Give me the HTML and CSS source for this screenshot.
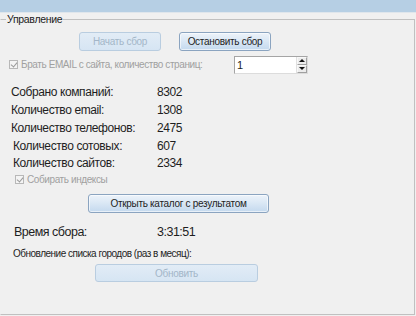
FILE: index.html
```html
<!DOCTYPE html>
<html lang="ru">
<head>
  <meta charset="UTF-8" />
  <title>Управление</title>
  <link rel="stylesheet" href="styles.css">
</head>
<body>
  <div class="topbar"></div>

  <fieldset class="group">
    <legend>Управление</legend>

    <!-- Кнопки запуска -->
    <div class="row actions">
      <button class="btn wide-start" disabled>Начать сбор</button>
      <button class="btn wide-stop">Остановить сбор</button>
    </div>

    <!-- Страницы сайта -->
    <div class="row pages">
      <label class="check disabled"><span class="box"></span>Брать EMAIL с сайта, количество страниц:</label>
      <div class="spin">
        <span class="spin-value">1</span>
        <span class="spin-arrows">
          <span class="arrow up"></span>
          <span class="arrow down"></span>
        </span>
      </div>
    </div>

    <!-- Статистика -->
    <div class="stats">
      <div class="stat s1"><span class="label">Собрано компаний:</span><span>8302</span></div>
      <div class="stat s2"><span class="label">Количество email:</span><span>1308</span></div>
      <div class="stat s3"><span class="label">Количество телефонов:</span><span>2475</span></div>
      <div class="stat s4 shift"><span class="label">Количество сотовых:</span><span>607</span></div>
      <div class="stat s5 shift"><span class="label">Количество сайтов:</span><span>2334</span></div>
    </div>

    <div class="row indexes">
      <label class="check disabled"><span class="box"></span>Собирать индексы</label>
    </div>

    <div class="row open">
      <button class="btn wide-open">Открыть каталог с результатом</button>
    </div>

    <div class="row time">
      <span class="time-label">Время сбора:</span>
      <span>3:31:51</span>
    </div>

    <div class="row cities">Обновление списка городов (раз в месяц):</div>

    <div class="row refresh">
      <button class="btn wide-refresh" disabled>Обновить</button>
    </div>
  </fieldset>
</body>
</html>
```

FILE: styles.css
```css
* {
  margin: 0;
  padding: 0;
  box-sizing: border-box;
  font-family: "Liberation Sans", Arial, sans-serif;
}

body {
  width: 416px;
  height: 316px;
  background: #f0f0f0;
  color: #1e1e1e;
  overflow: hidden;
  display: flex;
  flex-direction: column;
}

.topbar {
  height: 13px;
  background: #b6cfe4;
  border-bottom: 1px solid #dfe6ec;
}

.group {
  width: 415px;
  height: 302px;
  border: 1px solid #c0c0c0;
  border-left-color: #f0f0f0;
  padding: 0;
  margin: 0;
}

.group legend {
  font-size: 10.5px;
  line-height: 13px;
  letter-spacing: -0.3px;
  margin-left: 5px;
  padding: 0 1px;
  color: #222;
}

.row {
  display: flex;
  align-items: center;
}

/* Кнопки */
.btn {
  height: 19px;
  font-size: 10px;
  letter-spacing: -0.3px;
  color: #1e1e1e;
  border: 1px solid #8ba4c0;
  border-radius: 3px;
  background: linear-gradient(#edf3fa, #dbe8f5 45%, #c4d9ee);
  box-shadow: inset 0 0 0 1px rgba(255, 255, 255, 0.6);
}

.btn:disabled {
  color: #a3b6c8;
  border-color: #b9cde0;
  background: linear-gradient(#e2ecf6, #d6e5f3);
  box-shadow: none;
}

.actions {
  margin-top: 6px;
  padding-left: 78px;
  gap: 18px;
}

.wide-start { width: 82px; }
.wide-stop { width: 92px; }

.pages {
  margin-top: 4px;
  height: 19px;
  justify-content: space-between;
  padding-left: 8px;
  padding-right: 106px;
}

.check {
  display: flex;
  align-items: center;
  font-size: 10px;
  letter-spacing: -0.4px;
  gap: 3px;
  white-space: nowrap;
}

.check.disabled {
  color: #a0a0a0;
}

.box {
  width: 9px;
  height: 9px;
  border: 1px solid #b8b8b8;
  background: #f4f4f4;
  position: relative;
}

.box::after {
  content: "";
  position: absolute;
  left: 2px;
  top: 0;
  width: 3px;
  height: 5px;
  border: solid #9a9a9a;
  border-width: 0 1px 1px 0;
  transform: rotate(40deg);
}

.spin {
  width: 74px;
  height: 18px;
  background: #fff;
  border: 1px solid #a5a5a5;
  border-right-color: #dcdcdc;
  border-bottom-color: #dcdcdc;
  display: flex;
  justify-content: space-between;
  align-items: center;
}

.spin-value {
  font-size: 11px;
  padding-left: 2px;
}

.spin-arrows {
  width: 11px;
  height: 16px;
  display: flex;
  flex-direction: column;
  border-left: 1px solid #e0e0e0;
  background: #ececec;
}

.arrow {
  flex: 1;
  display: flex;
  justify-content: center;
  align-items: center;
  border: 1px solid #f8f8f8;
  border-right-color: #a0a0a0;
  border-bottom-color: #a0a0a0;
}

.arrow::after {
  content: "";
  border-left: 3px solid transparent;
  border-right: 3px solid transparent;
}

.up::after { border-bottom: 3px solid #111; }
.down::after { border-top: 3px solid #111; }

/* Статистика */
.stats {
  margin-top: 8px;
  font-size: 12px;
  letter-spacing: -0.4px;
}

.stat {
  display: flex;
  align-items: center;
  padding-left: 10px;
  height: 18px;
}

.stat.s1 { height: 19px; }
.stat.s4,
.stat.s5 { height: 17px; }

.stat.shift { padding-left: 12px; }

.stat .label {
  width: 146px;
}

.stat.shift .label {
  width: 144px;
}

.indexes {
  height: 17px;
  padding-left: 14px;
}

.open {
  margin-top: 6px;
  padding-left: 87px;
}

.wide-open { width: 181px; }

.time {
  margin-top: 9px;
  height: 20px;
  padding-left: 13px;
  font-size: 12.5px;
  letter-spacing: -0.5px;
}

.time-label { width: 143px; }

.cities {
  margin-top: 2px;
  height: 18px;
  padding-left: 12px;
  font-size: 10px;
  letter-spacing: -0.5px;
}

.refresh {
  margin-top: 2px;
  padding-left: 94px;
}

.wide-refresh {
  width: 163px;
  height: 18px;
}
```
